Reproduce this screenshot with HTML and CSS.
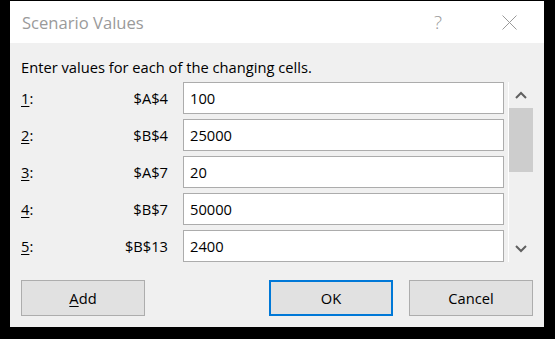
FILE: index.html
```html
<!DOCTYPE html>
<html lang="en">
<head>
    <meta charset="UTF-8">
    <title>Scenario Values</title>
    <link rel="stylesheet" href="styles.css">
</head>
<body>
    <div class="dialog">
        <div class="titlebar">
            <span class="title">Scenario Values</span>
            <span class="title-btn help">?</span>
            <span class="title-btn close">
                <svg width="15" height="15" viewBox="0 0 15 15">
                    <path d="M0.5 0.5 L14.5 14.5 M14.5 0.5 L0.5 14.5" stroke="#9a9a9a" stroke-width="1" fill="none"/>
                </svg>
            </span>
        </div>

        <div class="content">
            <p class="intro">Enter values for each of the changing cells.</p>

            <div class="values">
                <div class="rows">
                    <div class="row">
                        <span class="num"><u>1</u>:</span>
                        <span class="ref">$A$4</span>
                        <input class="field" type="text" value="100">
                    </div>
                    <div class="row">
                        <span class="num"><u>2</u>:</span>
                        <span class="ref">$B$4</span>
                        <input class="field" type="text" value="25000">
                    </div>
                    <div class="row">
                        <span class="num"><u>3</u>:</span>
                        <span class="ref">$A$7</span>
                        <input class="field" type="text" value="20">
                    </div>
                    <div class="row">
                        <span class="num"><u>4</u>:</span>
                        <span class="ref">$B$7</span>
                        <input class="field" type="text" value="50000">
                    </div>
                    <div class="row">
                        <span class="num"><u>5</u>:</span>
                        <span class="ref">$B$13</span>
                        <input class="field" type="text" value="2400">
                    </div>
                </div>

                <div class="scrollbar">
                    <span class="arrow">
                        <svg width="12" height="8" viewBox="0 0 12 8">
                            <polyline points="1,7 6,2 11,7" stroke="#606060" stroke-width="2" fill="none"/>
                        </svg>
                    </span>
                    <div class="track">
                        <div class="thumb"></div>
                    </div>
                    <span class="arrow">
                        <svg width="12" height="8" viewBox="0 0 12 8">
                            <polyline points="1,1 6,6 11,1" stroke="#606060" stroke-width="2" fill="none"/>
                        </svg>
                    </span>
                </div>
            </div>

            <div class="buttons">
                <button class="btn"><u>A</u>dd</button>
                <div class="btn-group">
                    <button class="btn btn-default">OK</button>
                    <button class="btn">Cancel</button>
                </div>
            </div>
        </div>
    </div>
</body>
</html>
```

FILE: styles.css
```css
body {
    margin: 0;
    background: #000;
    font-family: "Open Sans", "Noto Sans", sans-serif;
    font-size: 14.7px;
    color: #000;
}
.dialog {
    width: 534px;
    height: 326px;
    margin: 1px 0 0 10px;
    background: #f0f0f0;
    display: flex;
    flex-direction: column;
}

/* title bar */
.titlebar {
    height: 42px;
    background: #fff;
    display: flex;
    align-items: center;
    padding-left: 12px;
}
.title {
    flex: 1;
    font-size: 16.6px;
    color: #9a9a9a;
}
.title-btn {
    width: 72px;
    display: flex;
    justify-content: center;
    align-items: center;
    color: #9a9a9a;
}
.help {
    font-size: 19px;
    font-weight: 300;
}
.close {
    width: 70px;
}

/* body */
.content {
    padding: 14px 11px 11px 11px;
}
.intro {
    margin: 0 0 5px 0;
    line-height: 20px;
}
.values {
    display: flex;
    gap: 4px;
}
.rows {
    display: flex;
    flex-direction: column;
    gap: 5px;
}
.row {
    display: grid;
    grid-template-columns: 60px 102px 321px;
    align-items: center;
    height: 32px;
}
.num u, .btn u {
    text-decoration-thickness: 1px;
    text-underline-offset: 2px;
}
.ref {
    text-align: right;
    padding-right: 15px;
}
.field {
    box-sizing: border-box;
    width: 321px;
    height: 32px;
    margin: 0;
    border: 1px solid #acacac;
    background: #fff;
    padding: 0 6px;
    font-family: inherit;
    font-size: 14.7px;
    color: #000;
    outline: none;
}

/* scrollbar */
.scrollbar {
    width: 24px;
    height: 180px;
    border-left: 1px solid #fff;
    display: flex;
    flex-direction: column;
}
.arrow {
    height: 26px;
    display: flex;
    justify-content: center;
    align-items: center;
}
.track {
    flex: 1;
}
.thumb {
    height: 64px;
    background: #cdcdcd;
}

/* buttons */
.buttons {
    margin-top: 18px;
    display: flex;
    justify-content: space-between;
}
.btn-group {
    display: flex;
    gap: 16px;
}
.btn {
    box-sizing: border-box;
    width: 124px;
    height: 36px;
    margin: 0;
    border: 1px solid #adadad;
    background: #e1e1e1;
    font-family: inherit;
    font-size: 14.7px;
    color: #000;
    padding: 0;
}
.btn-default {
    border: 2px solid #0078d7;
}
```
